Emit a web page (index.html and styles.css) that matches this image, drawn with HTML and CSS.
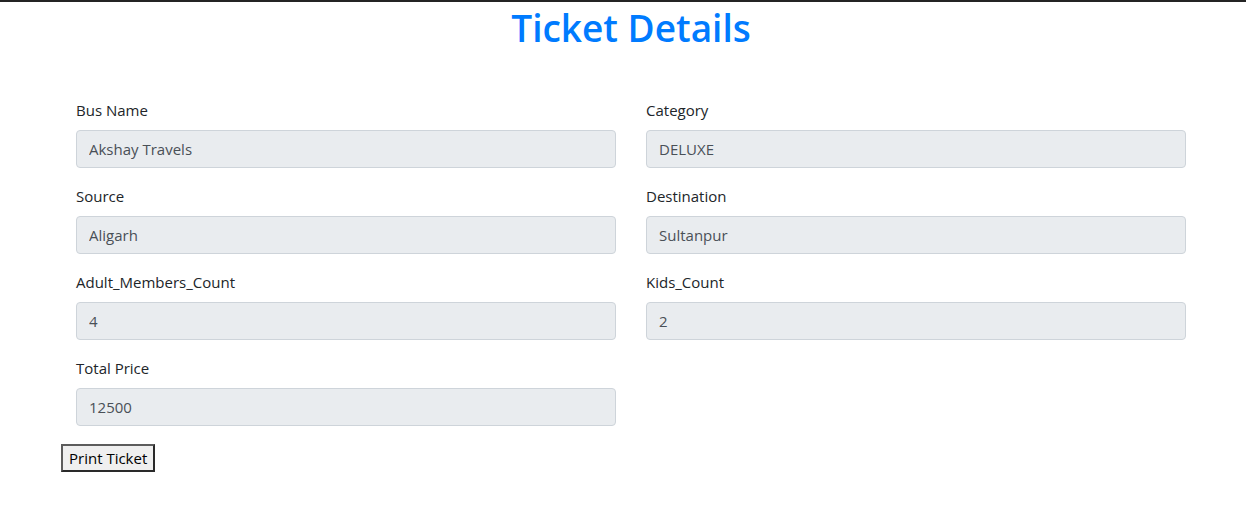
FILE: index.html
```html
<!DOCTYPE html>
<html lang="en">
<head>
<meta charset="utf-8">
<title>Ticket Details</title>
<link rel="stylesheet" href="styles.css">
</head>
<body>
<div class="page">
  <h1 class="title">Ticket Details</h1>
  <form class="ticket-form">
    <div class="field">
      <label class="field-label">Bus Name</label>
      <input class="field-input" type="text" value="Akshay Travels" readonly>
    </div>
    <div class="field">
      <label class="field-label">Category</label>
      <input class="field-input" type="text" value="DELUXE" readonly>
    </div>
    <div class="field">
      <label class="field-label">Source</label>
      <input class="field-input" type="text" value="Aligarh" readonly>
    </div>
    <div class="field">
      <label class="field-label">Destination</label>
      <input class="field-input" type="text" value="Sultanpur" readonly>
    </div>
    <div class="field">
      <label class="field-label">Adult_Members_Count</label>
      <input class="field-input" type="text" value="4" readonly>
    </div>
    <div class="field">
      <label class="field-label">Kids_Count</label>
      <input class="field-input" type="text" value="2" readonly>
    </div>
    <div class="field">
      <label class="field-label">Total Price</label>
      <input class="field-input" type="text" value="12500" readonly>
    </div>
  </form>
  <button class="print-btn" type="button">Print Ticket</button>
</div>
</body>
</html>
```

FILE: styles.css
```css
html, body {
  margin: 0;
  padding: 0;
  background: #fff;
}

body {
  border-top: 2px solid #242424;
  font-family: "Open Sans", "Noto Sans", sans-serif;
  font-size: 15px;
  color: #212529;
}

.page {
  width: 1140px;
  padding-left: 61px;
}

.title {
  margin: 0 0 46px;
  padding-top: 2px;
  text-align: center;
  font-size: 37px;
  line-height: 48px;
  font-weight: 600;
  color: #007bff;
}

.ticket-form {
  display: grid;
  grid-template-columns: 540px 540px;
  column-gap: 30px;
  padding: 0 15px;
}

.field {
  display: flex;
  flex-direction: column;
  margin-bottom: 16px;
}

.field-label {
  display: block;
  height: 24px;
  line-height: 24px;
  margin-bottom: 8px;
}

.field-input {
  box-sizing: border-box;
  height: 38px;
  width: 100%;
  padding: 6px 12px;
  font-family: inherit;
  font-size: 15px;
  line-height: 24px;
  color: #495057;
  background: #e9ecef;
  border: 1px solid #ced4da;
  border-radius: 4px;
  outline: none;
}

.print-btn {
  display: block;
  box-sizing: border-box;
  height: 28px;
  margin-top: 2px;
  padding: 1px 6px;
  font-family: inherit;
  font-size: 15px;
  line-height: 22px;
  color: #000;
  background: #efefef;
  border: 2px solid #333;
  border-color: #5c5c5c #2a2a2a #2a2a2a #5c5c5c;
}
```
